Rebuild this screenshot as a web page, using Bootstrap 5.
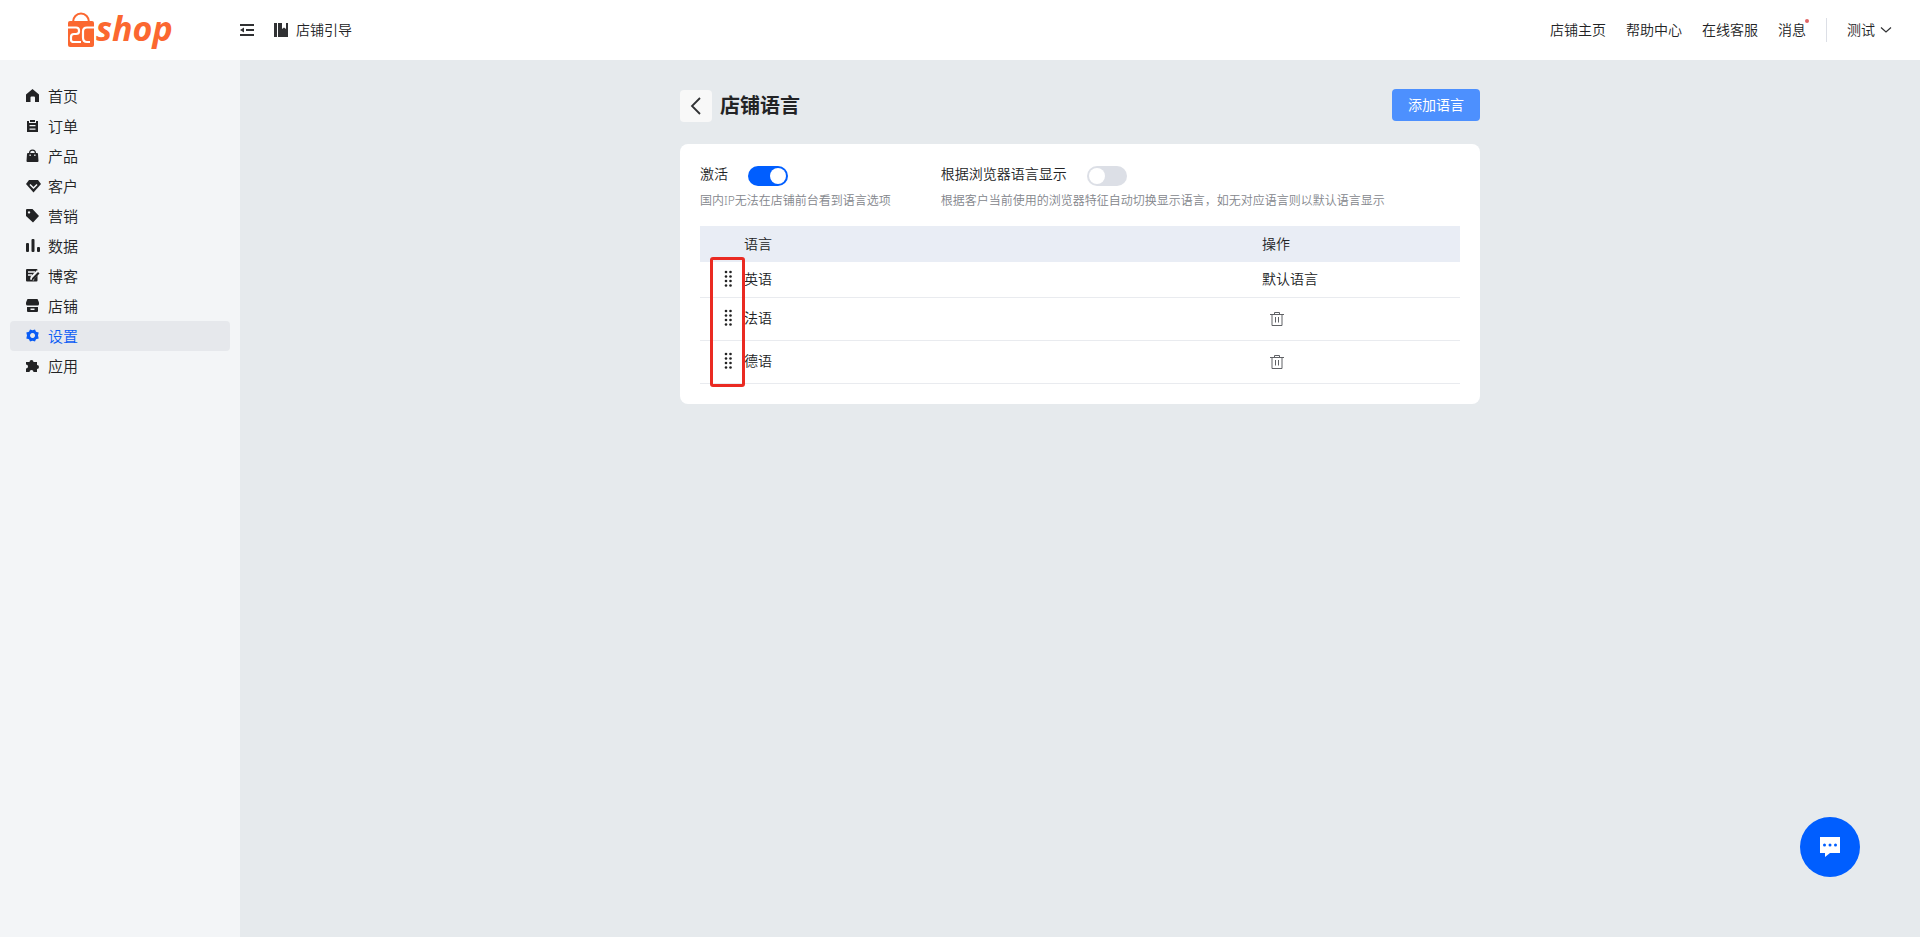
<!DOCTYPE html>
<html lang="zh-CN">
<head>
<meta charset="utf-8">
<meta name="viewport" content="width=device-width, initial-scale=1">
<title>店铺语言</title>
<link href="https://cdn.jsdelivr.net/npm/bootstrap@5.3.0/dist/css/bootstrap.min.css" rel="stylesheet">
<style>
  body { font-family: "Noto Sans", "Noto Sans CJK SC", sans-serif; font-size: 14px; font-weight: 350; line-height: 20px; color: #222325; background: #e6eaed; }
  a { color: inherit; text-decoration: none; }
  svg { display: block; flex: none; }
  .topbar { height: 60px; }
  .brand-area, .sidebar { width: 240px; flex: none; }
  .brand-area svg { margin-left: 66px; }
  .brand-word { font: italic 700 34px "Open Sans", sans-serif; fill: #fb6730; }
  .top-links { gap: 20px; padding-right: 27px; }
  .split { width: 1px; height: 24px; background: #dcdfe6; }
  .news-dot { position: absolute; top: -1px; right: -3px; width: 4px; height: 4px; border-radius: 50%; background: #e06666; }
  .sidebar { background: #f3f5f7; padding: 21px 10px; }
  .side-link { display: flex; align-items: center; gap: 7px; height: 30px; padding: 0 15px 1px; border-radius: 4px; font-size: 15px; color: #222325; }
  .side-link.active { background: #e6e8ec; color: #0a5cf5; }
  .page { max-width: 800px; padding-top: 29px; }
  .back-btn { width: 32px; height: 32px; border-radius: 4px; background: #f8f8f8; }
  .page-title { font-size: 20px; line-height: 32px; padding-top: 1px; }
  .add-btn { height: 32px; padding: 0 16px 2px; border: 0; border-radius: 4px; font-size: 14px; background: #4d90fe; }
  .panel { margin-top: 22px; padding: 20px; border-radius: 8px; background: #fff; }
  .option-list { gap: 50px; }
  .option { gap: 20px; height: 24px; }
  .option label { padding-bottom: 4px; }
  .form-check-input.toggle { width: 40px; height: 20px; border: 0; margin: 0; background-color: #dcdfe6; border-radius: 10px; background-image: url("data:image/svg+xml,%3csvg xmlns='http://www.w3.org/2000/svg' viewBox='-10 -10 20 20'%3e%3ccircle r='8' fill='%23fff'/%3e%3c/svg%3e"); background-position: left center; background-size: contain; background-repeat: no-repeat; }
  .form-check-input.toggle:checked { background-color: #005eff; background-position: right center; }
  .hint { font-size: 12px; line-height: 26px; color: #83868c; }
  .table-zone { position: relative; margin-top: 12px; }
  .lang-table { margin: 0; table-layout: fixed; }
  .lang-table > :not(caption) > * > * { padding: 0 0 1px; height: 43px; vertical-align: middle; color: #222325; font-weight: inherit; border-color: #e9ebef; }
  .lang-table thead th { height: 36px; background: #e9edf5; border: 0; }
  .lang-table tbody tr:first-child td { height: 35px; padding: 0; }
  .grip-col { width: 44px; }
  .action-col { width: 198px; }
  .grip { width: 20px; margin-left: 18px; color: #222; }
  .trash { color: #606266; margin-left: 8px; }
  .mark-frame { position: absolute; left: 10px; top: 31px; bottom: -3px; width: 35px; border: 3px solid #ea2a22; border-radius: 3px; pointer-events: none; }
  .chat-btn { right: 60px; bottom: 60px; width: 60px; height: 60px; background: #005eff; z-index: 10; }
</style>
</head>
<body class="d-flex flex-column min-vh-100">
<header class="topbar d-flex align-items-center bg-white">
  <div class="brand-area">
    <a href="#" aria-label="2Cshop">
      <svg width="120" height="60" viewBox="0 0 120 60">
        <path d="M7 22a8 8.500 0 0 1 16 0" fill="none" stroke="#fb6730" stroke-width="2"/>
        <rect x="2" y="21" width="26" height="26" rx="2" fill="#fb6730"/>
        <path d="M1 27.500h9q3 0 3 3v1q0 2.500-3 2.500H8q-3 0-3 3v3q0 2 3 2h7" fill="none" stroke="#fff" stroke-width="2.200"/>
        <path d="M29 27.500h-8q-4 0-4 4v6q0 4.500 4 4.500h3" fill="none" stroke="#fff" stroke-width="2.200"/>
        <text class="brand-word" x="30" y="41">shop</text>
      </svg>
    </a>
  </div>
  <button class="btn p-0 border-0" aria-label="收起菜单">
    <svg width="14" height="14" viewBox="0 0 14 14" fill="#303133"><path d="M0 1h14v2H0zM6 6h8v2H6zM0 11h14v2H0zM4 4.500v5L0 7z"/></svg>
  </button>
  <a href="#" class="d-flex align-items-center gap-2 ms-3 ps-1">
    <svg width="14" height="14" viewBox="0 0 14 14" fill="#303133"><path d="M0 0h3v14H0zM4 0h4v6l2-1.500L12 6V0h2v14H4z"/></svg>
    店铺引导
  </a>
  <nav class="top-links d-flex align-items-center ms-auto">
    <a href="#">店铺主页</a><a href="#">帮助中心</a><a href="#">在线客服</a>
    <a href="#" class="position-relative">消息<span class="news-dot"></span></a>
    <span class="split"></span>
    <a href="#" class="d-flex align-items-center gap-1">测试
      <svg width="14" height="14" viewBox="0 0 14 14" fill="none" stroke="#303133" stroke-width="1.200"><path d="M2 4.500 7 9l5-4.500"/></svg></a>
  </nav>
</header>
<div class="d-flex flex-grow-1">
  <nav class="sidebar">
    <a href="#" class="side-link"><svg width="16" height="16" viewBox="0 0 16 16" fill="currentColor"><path d="M7.500 1 14 6.500V14h-4V9.500a1 1 0 0 0-1-1H6.500a1 1 0 0 0-1 1V14H1V6.500z"/></svg>首页</a>
    <a href="#" class="side-link"><svg width="16" height="16" viewBox="0 0 16 16" fill="currentColor"><path fill-rule="evenodd" d="M2 3h2v2h7V3h2v11H2zM4.500 7v1.300h6V7zm0 3.500v1.300h6v-1.300zM5 2h5v2H5z"/></svg>订单</a>
    <a href="#" class="side-link"><svg width="16" height="16" viewBox="0 0 16 16" fill="currentColor"><path fill-rule="evenodd" d="M4 5a3.500 3.500 0 0 1 7 0h1q1 0 1 1l.5 7q0 1-1 1h-10q-1 0-1-1L2 6q0-1 1-1zm1.200 0h4.600a2.300 2.300 0 0 0-4.600 0zM4.500 6.500V8h1.300V6.500zm4.700 0V8h1.300V6.500z"/></svg>产品</a>
    <a href="#" class="side-link"><svg width="16" height="16" viewBox="0 0 16 16" fill="currentColor"><path d="M4 2h9l3 4-7.500 8.500L1 6z"/><path d="M5 6.500 8.500 10 12 6.500" fill="none" stroke="#f3f5f7" stroke-width="1.500"/></svg>客户</a>
    <a href="#" class="side-link"><svg width="16" height="16" viewBox="0 0 16 16" fill="currentColor"><path fill-rule="evenodd" d="M1 2q0-1 1-1h5.500L14 8 8 14.500 1 8zm3 1.200a1.200 1.200 0 1 0 .1 0z"/></svg>营销</a>
    <a href="#" class="side-link"><svg width="16" height="16" viewBox="0 0 16 16" fill="currentColor"><rect x="1" y="5" width="3" height="9" rx="1"/><rect x="6.500" y="1" width="3" height="13" rx="1"/><rect x="12" y="9" width="3" height="5" rx="1"/></svg>数据</a>
    <a href="#" class="side-link"><svg width="16" height="16" viewBox="0 0 16 16" fill="currentColor"><path d="M2 1h9.500q1 0 1 1v10.500q0 1-1 1H2q-1 0-1-1V2q0-1 1-1z"/><path d="M3 4h7M3 7h4" stroke="#f3f5f7" stroke-width="1.300"/><path d="m7 12 .5-2.500 6-6" stroke="#f3f5f7" stroke-width="4" fill="none"/><path d="m6.500 12.500.7-2.500 5.800-6 1.500 1.500-5.800 6z"/></svg>博客</a>
    <a href="#" class="side-link"><svg width="16" height="16" viewBox="0 0 16 16" fill="currentColor"><path d="M2.500 1h10L14 4.500V6q0 1.500-1.500 1.500h-10Q1 7.500 1 6V4.500z"/><path fill-rule="evenodd" d="M2 9h11v4q0 1-1 1H3q-1 0-1-1zm3.500 1.500V12h4v-1.500z"/></svg>店铺</a>
    <a href="#" class="side-link active" aria-current="page"><svg width="16" height="16" viewBox="0 0 16 16" fill="currentColor"><path fill-rule="evenodd" d="M5 1.500 7.500 2.300 10 1.500l1 2.300 2.700.7L13 7.500l.7 3-2.700.7-1 2.300-2.500-.8-2.500.8-1-2.300-2.700-.7.7-3-.7-3L4 3.800zM7.500 5a2.500 2.500 0 1 0 .1 0z"/></svg>设置</a>
    <a href="#" class="side-link"><svg width="16" height="16" viewBox="0 0 16 16" fill="currentColor"><path d="M1 4h3.500a2 2 0 1 1 4 0H12v3a2 2 0 1 1 0 4v3H8.500a2 2 0 0 0-4 0H1v-3.500a2 2 0 0 0 0-4z"/></svg>应用</a>
  </nav>
  <main class="flex-grow-1">
    <div class="page mx-auto">
      <div class="d-flex align-items-end gap-2">
        <a href="#" class="back-btn d-flex align-items-center justify-content-center" aria-label="返回"><svg width="16" height="18" viewBox="0 0 16 18" fill="none" stroke="#303133" stroke-width="1.800"><path d="M12 1 4 9l8 8"/></svg></a>
        <h1 class="page-title fw-bold m-0">店铺语言</h1>
        <button class="btn btn-primary add-btn ms-auto align-self-start">添加语言</button>
      </div>
      <section class="panel">
        <div class="option-list d-flex">
          <div>
            <div class="option d-flex align-items-center form-switch p-0"><label for="enable">激活</label><input id="enable" class="form-check-input toggle" type="checkbox" role="switch" checked></div>
            <div class="hint">国内IP无法在店铺前台看到语言选项</div>
          </div>
          <div>
            <div class="option d-flex align-items-center form-switch p-0"><label for="browser">根据浏览器语言显示</label><input id="browser" class="form-check-input toggle" type="checkbox" role="switch"></div>
            <div class="hint">根据客户当前使用的浏览器特征自动切换显示语言，如无对应语言则以默认语言显示</div>
          </div>
        </div>
        <div class="table-zone">
          <svg width="0" height="0" class="position-absolute" aria-hidden="true">
            <symbol id="grip" viewBox="0 0 10 18"><g fill="currentColor"><circle cx="3" cy="2" r="1.300"/><circle cx="7.500" cy="2" r="1.300"/><circle cx="3" cy="6.500" r="1.300"/><circle cx="7.500" cy="6.500" r="1.300"/><circle cx="3" cy="11" r="1.300"/><circle cx="7.500" cy="11" r="1.300"/><circle cx="3" cy="15.500" r="1.300"/><circle cx="7.500" cy="15.500" r="1.300"/></g></symbol>
            <symbol id="trash" viewBox="0 0 14 16"><path d="M0 3.500h14M4.500 3.500v-2h5v2M2 3.500v11h10v-11M5.500 6v5.500M8.500 6v5.500" fill="none" stroke="currentColor"/></symbol>
          </svg>
          <table class="table lang-table">
            <thead><tr><th class="grip-col"></th><th>语言</th><th class="action-col">操作</th></tr></thead>
            <tbody>
              <tr><td><div class="grip d-flex justify-content-center"><svg width="10" height="18"><use href="#grip"/></svg></div></td><td>英语</td><td>默认语言</td></tr>
              <tr><td><div class="grip d-flex justify-content-center"><svg width="10" height="18"><use href="#grip"/></svg></div></td><td>法语</td><td><button class="btn p-0 border-0 trash" aria-label="删除法语"><svg width="14" height="16"><use href="#trash"/></svg></button></td></tr>
              <tr><td><div class="grip d-flex justify-content-center"><svg width="10" height="18"><use href="#grip"/></svg></div></td><td>德语</td><td><button class="btn p-0 border-0 trash" aria-label="删除德语"><svg width="14" height="16"><use href="#trash"/></svg></button></td></tr>
            </tbody>
          </table>
          <div class="mark-frame"></div>
        </div>
      </section>
    </div>
  </main>
</div>
<button class="btn chat-btn position-fixed rounded-circle border-0 p-0 d-flex align-items-center justify-content-center" aria-label="在线聊天">
  <svg width="20" height="20" viewBox="0 0 20 20"><path d="M0 0h20v16H10l-5 4v-4H0z" fill="#fff"/><g fill="#005eff"><circle cx="4.500" cy="8" r="1.500"/><circle cx="10" cy="8" r="1.500"/><circle cx="15.500" cy="8" r="1.500"/></g></svg>
</button>
<script src="https://cdn.jsdelivr.net/npm/bootstrap@5.3.0/dist/js/bootstrap.bundle.min.js"></script>
</body>
</html>
